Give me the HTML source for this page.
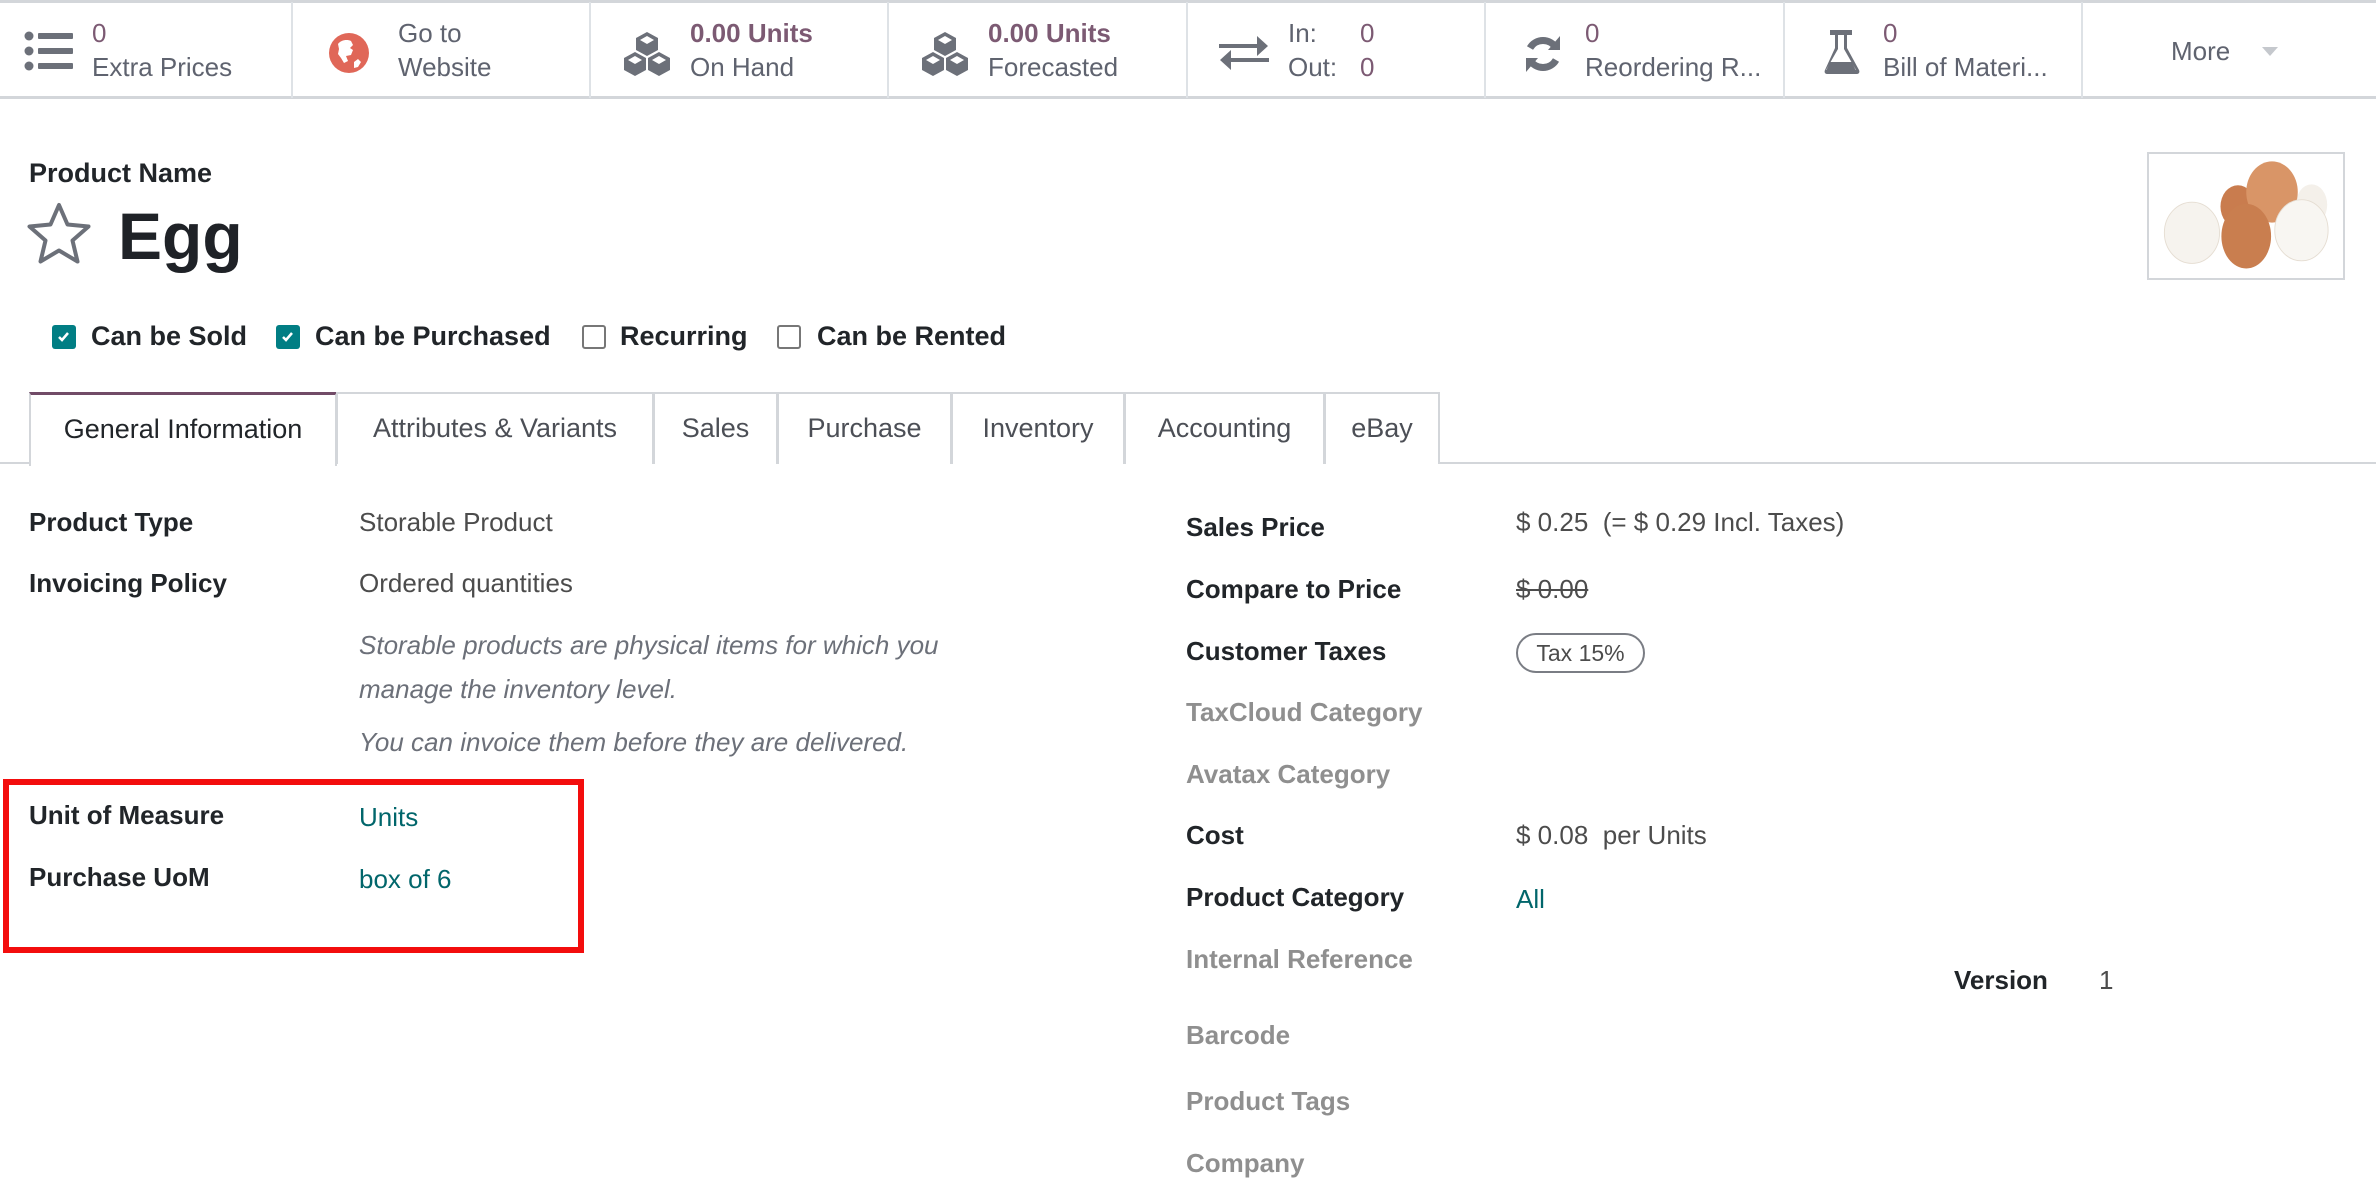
<!DOCTYPE html>
<html><head><meta charset="utf-8"><style>
*{margin:0;padding:0;box-sizing:border-box}
body{width:2376px;height:1196px;background:#fff;font-family:"Liberation Sans",sans-serif;color:#212529;position:relative;overflow:hidden}
.a{position:absolute;white-space:nowrap;line-height:32px;font-size:26px}
.b{font-weight:bold;color:#212529}
.g{color:#8f8f8f;font-weight:bold}
.v{color:#4c4c4c}
.lnk{color:#01666b}
.btn{position:absolute;top:2px;height:96px;border-right:2px solid #dee2e6}
.bt{position:absolute;font-size:26px;line-height:34px;color:#5f636f;white-space:nowrap}
.num{color:#7c5a73}
.tab{position:absolute;top:392px;height:72px;border:2px solid #d3d6da;border-bottom:none;font-size:27px;color:#4c4f56;text-align:center;line-height:68px;background:#fff}
.cb{position:absolute;top:325px;width:24px;height:24px;border-radius:3px}
.on{background:#017e84}
.off{border:2px solid #777;background:#fff}
</style></head><body>
<div style="position:absolute;left:0;top:0;width:2376px;height:3px;background:#d3d6da"></div>
<div style="position:absolute;left:0;top:96px;width:2376px;height:3px;background:#d3d6da"></div>
<div class="btn" style="left:0;width:293px"></div>
<div class="btn" style="left:293px;width:298px"></div>
<div class="btn" style="left:591px;width:298px"></div>
<div class="btn" style="left:889px;width:299px"></div>
<div class="btn" style="left:1188px;width:298px"></div>
<div class="btn" style="left:1486px;width:299px"></div>
<div class="btn" style="left:1785px;width:298px"></div>

<svg style="position:absolute;left:24px;top:30px" width="50" height="42" viewBox="0 0 50 42" fill="#6c7079"><circle cx="5" cy="6" r="4.5"/><circle cx="5" cy="21" r="4.5"/><circle cx="5" cy="36" r="4.5"/><rect x="14" y="3" width="35" height="6" rx="1"/><rect x="14" y="18" width="35" height="6" rx="1"/><rect x="14" y="33" width="35" height="6" rx="1"/></svg>
<div class="bt" style="left:92px;top:16px"><span class="num">0</span><br>Extra Prices</div>

<svg style="position:absolute;left:328px;top:32px" width="42" height="42" viewBox="0 0 42 42"><circle cx="21" cy="21" r="20" fill="#e06758"/><path d="M10 12c3-4 9-5 13-3l2 4-3 3 3 2-2 5-5 1 2 5-4 2-3-5-3-4 1-5z M26 30l4-3 3 3-3 5-4 1z" fill="#fff"/></svg>
<div class="bt" style="left:398px;top:16px">Go to<br>Website</div>

<svg style="position:absolute;left:617px;top:30px" width="60" height="48" viewBox="0 0 60 48" fill="#6c7079"><path d="M30 2l11 6v12l-11 6-11-6V8z M18 22l11 6v12l-11 6-11-6V28z M42 22l11 6v12l-11 6-11-6V28z"/><path d="M30 6l7 4-7 4-7-4z M18 26l7 4-7 4-7-4z M42 26l7 4-7 4-7-4z" fill="#fff"/></svg>
<div class="bt" style="left:690px;top:16px"><span class="num" style="font-weight:bold">0.00 Units</span><br>On Hand</div>

<svg style="position:absolute;left:915px;top:30px" width="60" height="48" viewBox="0 0 60 48" fill="#6c7079"><path d="M30 2l11 6v12l-11 6-11-6V8z M18 22l11 6v12l-11 6-11-6V28z M42 22l11 6v12l-11 6-11-6V28z"/><path d="M30 6l7 4-7 4-7-4z M18 26l7 4-7 4-7-4z M42 26l7 4-7 4-7-4z" fill="#fff"/></svg>
<div class="bt" style="left:988px;top:16px"><span class="num" style="font-weight:bold">0.00 Units</span><br>Forecasted</div>

<svg style="position:absolute;left:1219px;top:32px" width="50" height="40" viewBox="0 0 50 40" fill="#6c7079"><path d="M0 12h38V4l11 10-11 10v-8H0z"/><path d="M50 26H12v-8L1 28l11 10v-8h38z"/></svg>
<div class="bt" style="left:1288px;top:16px">In:<br>Out:</div>
<div class="bt num" style="left:1360px;top:16px">0<br>0</div>

<svg style="position:absolute;left:1522px;top:34px" width="42" height="40" viewBox="0 0 42 40" fill="none" stroke="#6c7079" stroke-width="7"><path d="M34 14A15 15 0 0 0 8 14"/><path d="M8 26A15 15 0 0 0 34 26"/><path d="M38 2v14H26z M4 38V24h12z" fill="#6c7079" stroke="none"/></svg>
<div class="bt" style="left:1585px;top:16px"><span class="num">0</span><br>Reordering R...</div>

<svg style="position:absolute;left:1822px;top:30px" width="40" height="44" viewBox="0 0 40 44" fill="#6c7079"><rect x="8" y="0" width="22" height="5"/><path d="M13 5h3v14L4 40h30L22 19V5h3v13l12 22c1 2 0 4-2 4H5c-2 0-3-2-2-4l10-22z"/><path d="M8 32h22l4 9H4z"/></svg>
<div class="bt" style="left:1883px;top:16px"><span class="num">0</span><br>Bill of Materi...</div>

<div class="bt" style="left:2171px;top:34px">More</div>
<div style="position:absolute;left:2262px;top:47px;width:0;height:0;border-left:8px solid transparent;border-right:8px solid transparent;border-top:9px solid #c5c8cd"></div>

<div class="a b" style="left:29px;top:157px;font-size:27px">Product Name</div>
<svg style="position:absolute;left:27px;top:202px" width="64" height="62" viewBox="0 0 64 62"><path d="M32 3l8.5 19.5 21 2-16 14 5 21L32 48.5 13.5 59.5l5-21-16-14 21-2z" fill="none" stroke="#6c7079" stroke-width="4" stroke-linejoin="round"/></svg>
<div class="a b" style="left:118px;top:194px;font-size:66px;line-height:84px;color:#1f2227">Egg</div>

<div style="position:absolute;left:2147px;top:152px;width:198px;height:128px;border:2px solid #d3d6da;background:#fff;overflow:hidden">
<svg width="194" height="124" viewBox="0 0 194 124"><g transform="translate(8,4) scale(0.92,0.85)"><ellipse cx="168" cy="55" rx="17" ry="24" fill="#f4f0ea"/><ellipse cx="88" cy="57" rx="19" ry="25" fill="#c97c4e"/><ellipse cx="125" cy="40" rx="28" ry="36" fill="#d99567"/><ellipse cx="38" cy="88" rx="30" ry="36" fill="#f6f3ee" stroke="#e5ddd2"/><ellipse cx="157" cy="85" rx="29" ry="36" fill="#f8f6f2" stroke="#e5ddd2"/><ellipse cx="97" cy="92" rx="27" ry="38" fill="#c97e4f"/></g></svg>
</div>

<div class="cb on" style="left:52px"></div><svg style="position:absolute;left:56px;top:330px" width="16" height="14"><path d="M3 7l3 3 6-7" stroke="#fff" stroke-width="2.5" fill="none"/></svg>
<div class="a b" style="left:91px;top:320px;font-size:27px">Can be Sold</div>
<div class="cb on" style="left:276px"></div><svg style="position:absolute;left:280px;top:330px" width="16" height="14"><path d="M3 7l3 3 6-7" stroke="#fff" stroke-width="2.5" fill="none"/></svg>
<div class="a b" style="left:315px;top:320px;font-size:27px">Can be Purchased</div>
<div class="cb off" style="left:582px"></div>
<div class="a b" style="left:620px;top:320px;font-size:27px">Recurring</div>
<div class="cb off" style="left:777px"></div>
<div class="a b" style="left:817px;top:320px;font-size:27px">Can be Rented</div>

<div style="position:absolute;left:0;top:462px;width:2376px;height:2px;background:#d3d6da"></div>
<div class="tab" style="left:29px;width:308px;color:#212529;height:74px;border-top:3px solid #714b67">General Information</div>
<div class="tab" style="left:336px;width:318px">Attributes &amp; Variants</div>
<div class="tab" style="left:653px;width:125px">Sales</div>
<div class="tab" style="left:777px;width:175px">Purchase</div>
<div class="tab" style="left:951px;width:174px">Inventory</div>
<div class="tab" style="left:1124px;width:201px">Accounting</div>
<div class="tab" style="left:1324px;width:116px">eBay</div>

<div class="a b" style="left:29px;top:506px">Product Type</div>
<div class="a v" style="left:359px;top:506px">Storable Product</div>
<div class="a b" style="left:29px;top:567px">Invoicing Policy</div>
<div class="a v" style="left:359px;top:567px">Ordered quantities</div>
<div class="a" style="left:359px;top:623px;font-style:italic;color:#6c7079;line-height:44px">Storable products are physical items for which you<br>manage the inventory level.</div>
<div class="a" style="left:359px;top:726px;font-style:italic;color:#6c7079">You can invoice them before they are delivered.</div>
<div style="position:absolute;left:3px;top:779px;width:581px;height:174px;border:6px solid #f30d0d"></div>
<div class="a b" style="left:29px;top:799px">Unit of Measure</div>
<div class="a lnk" style="left:359px;top:801px">Units</div>
<div class="a b" style="left:29px;top:861px">Purchase UoM</div>
<div class="a lnk" style="left:359px;top:863px">box of 6</div>

<div class="a b" style="left:1186px;top:511px">Sales Price</div>
<div class="a v" style="left:1516px;top:506px">$ 0.25&nbsp; (= $ 0.29 Incl. Taxes)</div>
<div class="a b" style="left:1186px;top:573px">Compare to Price</div>
<div class="a v" style="left:1516px;top:573px;text-decoration:line-through">$ 0.00</div>
<div class="a b" style="left:1186px;top:635px">Customer Taxes</div>
<div style="position:absolute;left:1516px;top:633px;width:129px;height:40px;border:2px solid #7a7d84;border-radius:20px;font-size:23px;line-height:36px;text-align:center;color:#4c4c4c">Tax 15%</div>
<div class="a g" style="left:1186px;top:696px">TaxCloud Category</div>
<div class="a g" style="left:1186px;top:758px">Avatax Category</div>
<div class="a b" style="left:1186px;top:819px">Cost</div>
<div class="a v" style="left:1516px;top:819px">$ 0.08&nbsp; per Units</div>
<div class="a b" style="left:1186px;top:881px">Product Category</div>
<div class="a lnk" style="left:1516px;top:883px">All</div>
<div class="a g" style="left:1186px;top:943px">Internal Reference</div>
<div class="a b" style="left:1954px;top:964px">Version</div>
<div class="a v" style="left:2099px;top:964px">1</div>
<div class="a g" style="left:1186px;top:1019px">Barcode</div>
<div class="a g" style="left:1186px;top:1085px">Product Tags</div>
<div class="a g" style="left:1186px;top:1147px">Company</div>
</body></html>
